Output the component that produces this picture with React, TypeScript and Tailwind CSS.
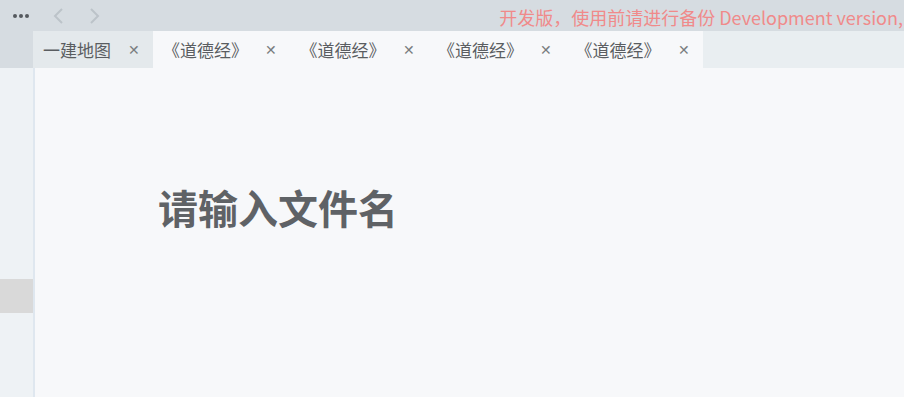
const TABS = ['一建地图', '《道德经》', '《道德经》', '《道德经》', '《道德经》']

const FONT = "font-['Microsoft_YaHei','Noto_Sans_CJK_SC',sans-serif]"

export default function App() {
  return (
    <div className={`flex h-[397px] w-[904px] flex-col overflow-hidden bg-[#f7f8fa] ${FONT}`}>
      {/* top bar */}
      <div className="flex h-[31px] shrink-0 items-center overflow-hidden bg-[#d6dce1]">
        <div className="ml-[13px] flex shrink-0 gap-[2px]">
          <span className="h-[4px] w-[4px] rounded-full bg-[#55595e]" />
          <span className="h-[4px] w-[4px] rounded-full bg-[#55595e]" />
          <span className="h-[4px] w-[4px] rounded-full bg-[#55595e]" />
        </div>
        <svg className="ml-[23px] shrink-0" width="14" height="18" viewBox="0 0 14 18" fill="none">
          <path d="M10 2 L3 9 L10 16" stroke="#bcc3c9" strokeWidth="2" />
        </svg>
        <svg className="ml-[22px] shrink-0" width="14" height="18" viewBox="0 0 14 18" fill="none">
          <path d="M3 2 L10 9 L3 16" stroke="#bcc3c9" strokeWidth="2" />
        </svg>
        <div className="ml-auto whitespace-nowrap pt-[2px] pr-[1px] text-[18px] leading-none text-[#f08a8a]">
          开发版，使用前请进行备份 Development version,
        </div>
      </div>

      <div className="flex min-h-0 flex-1">
        {/* sidebar */}
        <div className="flex w-[33px] shrink-0 flex-col bg-[#eef2f5]">
          <div className="h-[37px] bg-[#d6dce1]" />
          <div className="h-[211px]" />
          <div className="h-[34px] bg-[#d9d9d9]" />
        </div>

        <div className="flex min-w-0 flex-1 flex-col">
          {/* tab row */}
          <div className="flex h-[37px] shrink-0 bg-[#e9eef1]">
            {TABS.map((t, i) => (
              <div
                key={i}
                className={`flex items-center pl-[10px] text-[17px] text-[#5a5d61] ${
                  i === 0 ? 'w-[120px] bg-[#e4e9ec]' : 'w-[137.5px] bg-[#f7f8fa]'
                }`}
              >
                <span className="whitespace-nowrap">{t}</span>
                <span className="ml-[17px] text-[14px] text-[#7a7d80]">✕</span>
              </div>
            ))}
          </div>

          {/* content */}
          <div className="flex-1 border-l-2 border-[#dfe7ef] bg-[#f7f8fa] pl-[123px] pt-[119px]">
            <h1 className="text-[40px] font-bold leading-none text-[#5f6266]">请输入文件名</h1>
          </div>
        </div>
      </div>
    </div>
  )
}
